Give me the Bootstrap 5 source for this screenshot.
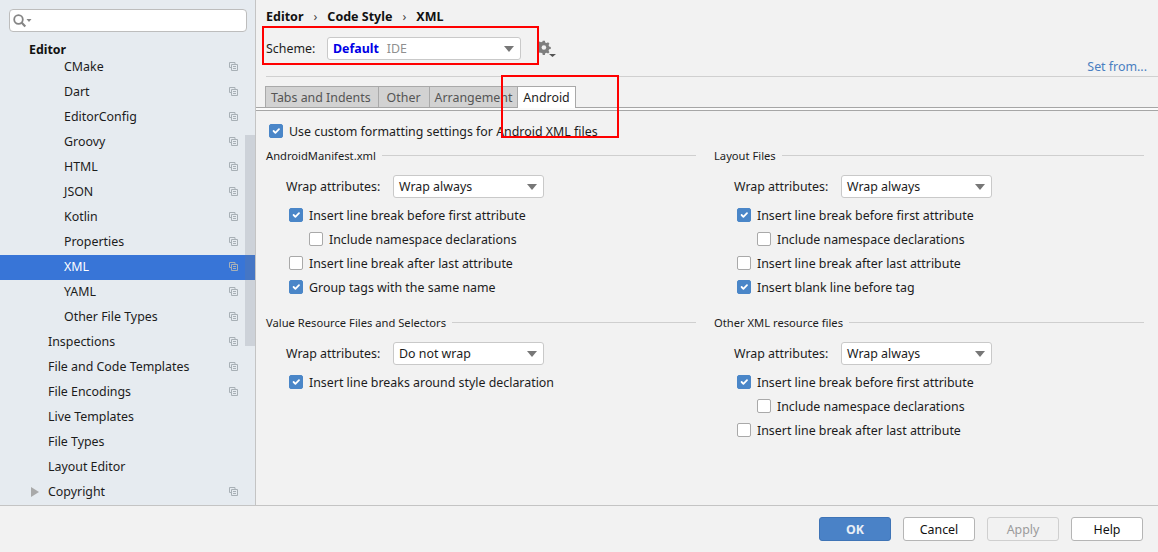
<!DOCTYPE html>
<html lang="en">
<head>
<meta charset="utf-8">
<title>Settings</title>
<link href="https://cdn.jsdelivr.net/npm/bootstrap@5.3.0/dist/css/bootstrap.min.css" rel="stylesheet">
<style>
html,body{height:552px;overflow:hidden}
body{background:#f2f2f2;font-family:"Noto Sans","Liberation Sans",sans-serif;font-size:12.4px;color:#1c1c1c;line-height:15px}
.shell{height:505px;position:relative}
.side{width:256px;flex:none;background:#e6ebf0;border-right:1px solid #c4c4c4;position:relative;overflow:hidden}
.searchbox{margin:9px 9px 0 9px;width:238px;height:23px;background:#fff;border:1px solid #bdbdbd;border-radius:4px;padding-left:3px}
.crow{height:25px;padding-right:17px}
.crow svg{width:9px;height:9px;flex:none;margin-top:-2px}
.crow.head{height:23px;padding-left:29px;padding-top:10px;font-weight:700;color:#111}
.crow.l1{padding-left:48px}
.crow.l2{padding-left:64px}
.crow.sel{background:#3875d7;color:#fff}
.crow .nm{flex:1;position:relative;top:-1px}
.thumb{position:absolute;left:245px;top:135px;width:10px;height:211px;background:rgba(120,125,135,.22)}
.tri{position:absolute;left:31px;top:487px;width:0;height:0;border-left:8px solid #a9a9a9;border-top:5px solid transparent;border-bottom:5px solid transparent}
.main{flex:1;min-width:0}
.crumbs{height:33px;padding:9px 0 0 10px;font-weight:700;font-size:12.5px;color:#111}
.crumbs .sep{font-weight:400;color:#444;margin:0 10px}
.schemerow{height:23px;margin-top:4px;padding-left:10px}
.schemerow .lb{width:61px}
.combo{background:#fff;border:1px solid #c9c9c9;border-radius:3px;height:23px;padding:0 5px;color:#1c1c1c;position:relative}
.combo::after{content:"";position:absolute;right:6px;top:8px;border-top:6px solid #777;border-left:5px solid transparent;border-right:5px solid transparent}
.schemecombo{width:194px}
.dflt{color:#0000e6;font-weight:700;margin-right:8px}
.ide{color:#8f8f8f}
.gearbtn{margin-left:16px;line-height:0}
.setrow{height:16px;padding-right:11px;text-align:right;line-height:13px}
.setfrom{color:#4a7fc1;text-decoration:none}
.setline{height:1px;background:#d0d0d0;margin-left:10px}
.tabstrip{margin-top:9px;padding-left:9px;height:21px}
.tabx{height:21px;padding:0 5px;background:#d2d2d2;border:1px solid #a9a9a9;border-right:0;border-bottom:0;color:#555;line-height:21px}
.tabx.firstt{padding-right:7px}
.tabx.wider{padding:0 8px}
.tabx.on{background:#fff;color:#1c1c1c;border-right:1px solid #a9a9a9;height:22px;position:relative;z-index:1}
.tabrule{height:4px;border-top:1px solid #a6a6a6;border-bottom:1px solid #a6a6a6;background:#fbfbfb}
.usecustom{margin:12px 0 0 13px;height:16px}
.colsgrid{display:grid;grid-template-columns:430px 430px;column-gap:18px;padding-left:10px;margin-top:7px}
.secthead{height:18px;color:#1c1c1c;font-size:11.2px}
.secthead i{flex:1;height:1px;background:#cfcfcf;margin-left:6px;margin-top:1px}
.wraprow{margin:11px 0 0 20px;height:23px}
.wraprow .lb{width:107px}
.wrapcombo{width:151px}
.chk{height:24px;margin-left:23px}
.chk.in{margin-left:43px}
.chklist{margin-top:5px}
.chk .form-check-input,.usecustom .form-check-input{width:14px;height:14px;margin:0 6px 0 0;flex:none;border:1px solid #a9a9a9;border-radius:2px;background-color:#fff}
.chk .form-check-input:checked,.usecustom .form-check-input:checked{background-color:#4a86c8;border-color:#4a86c8}
.sect2{margin-top:14px}
.bottom{height:47px;border-top:1px solid #c4c4c4;padding:11px 15px 0 0;gap:12px}
.bbtn{width:72px;height:24px;padding:0;font-size:12.4px;line-height:24px;border:1px solid #b5b5b5;border-radius:3px;background:#fff;color:#111}
.bbtn.okk{background:#4a82c7;border-color:#3f74b6;color:#e8eef6;font-weight:700}
.bbtn.off,.bbtn.off:disabled{background:#f2f2f2;border-color:#cfcfcf;color:#9b9b9b;opacity:1}
.redbox{position:absolute;border:2px solid #f00;pointer-events:none;z-index:5}
.rb1{left:262px;top:26px;width:277px;height:39px}
.rb2{left:501px;top:75px;width:118px;height:63px}
</style>
</head>
<body>
<svg width="0" height="0" class="position-absolute">
<symbol id="cp" viewBox="0 0 9 9"><path d="M2 5.500H.5V.5h5.500V2M2.500 2.500h6v6h-6zM4 4.500h3M4 6.500h3" fill="none" stroke="#a8b0b6" stroke-width="1"/></symbol>
</svg>
<div class="shell d-flex">
<aside class="side">
<div class="searchbox d-flex align-items-center">
<svg width="19" height="14" viewBox="0 0 19 14"><circle cx="5.500" cy="5.500" r="4.300" fill="none" stroke="#858585" stroke-width="1.800"/><path d="M8.500 8.500l3.800 4" stroke="#858585" stroke-width="2.200"/><path d="M13.500 5h5l-2.500 3z" fill="#858585"/></svg>
</div>
<div class="crow head d-flex align-items-start">Editor</div>
<div class="crow l2 d-flex align-items-center"><span class="nm">CMake</span><svg><use href="#cp"/></svg></div>
<div class="crow l2 d-flex align-items-center"><span class="nm">Dart</span><svg><use href="#cp"/></svg></div>
<div class="crow l2 d-flex align-items-center"><span class="nm">EditorConfig</span><svg><use href="#cp"/></svg></div>
<div class="crow l2 d-flex align-items-center"><span class="nm">Groovy</span><svg><use href="#cp"/></svg></div>
<div class="crow l2 d-flex align-items-center"><span class="nm">HTML</span><svg><use href="#cp"/></svg></div>
<div class="crow l2 d-flex align-items-center"><span class="nm">JSON</span><svg><use href="#cp"/></svg></div>
<div class="crow l2 d-flex align-items-center"><span class="nm">Kotlin</span><svg><use href="#cp"/></svg></div>
<div class="crow l2 d-flex align-items-center"><span class="nm">Properties</span><svg><use href="#cp"/></svg></div>
<div class="crow l2 sel d-flex align-items-center"><span class="nm">XML</span><svg><use href="#cp"/></svg></div>
<div class="crow l2 d-flex align-items-center"><span class="nm">YAML</span><svg><use href="#cp"/></svg></div>
<div class="crow l2 d-flex align-items-center"><span class="nm">Other File Types</span><svg><use href="#cp"/></svg></div>
<div class="crow l1 d-flex align-items-center"><span class="nm">Inspections</span><svg><use href="#cp"/></svg></div>
<div class="crow l1 d-flex align-items-center"><span class="nm">File and Code Templates</span><svg><use href="#cp"/></svg></div>
<div class="crow l1 d-flex align-items-center"><span class="nm">File Encodings</span><svg><use href="#cp"/></svg></div>
<div class="crow l1 d-flex align-items-center"><span class="nm">Live Templates</span></div>
<div class="crow l1 d-flex align-items-center"><span class="nm">File Types</span></div>
<div class="crow l1 d-flex align-items-center"><span class="nm">Layout Editor</span></div>
<div class="crow l1 d-flex align-items-center"><span class="nm">Copyright</span><svg><use href="#cp"/></svg></div>
<div class="thumb"></div>
<div class="tri"></div>
</aside>
<main class="main">
<div class="crumbs">Editor<span class="sep">›</span>Code Style<span class="sep">›</span>XML</div>
<div class="schemerow d-flex align-items-center">
<span class="lb">Scheme:</span>
<div class="combo schemecombo d-flex align-items-center"><span class="dflt">Default</span><span class="ide">IDE</span></div>
<span class="gearbtn"><svg width="20" height="18" viewBox="0 0 20 18"><path d="M7 1h2.600l.4 2 1.700.8 1.800-1.100 1.700 1.800-1.100 1.700.7 1.700 2 .5v2.500l-2 .5-.7 1.700 1.100 1.700-1.700 1.800-1.800-1.100-1.700.7-.4 2H7l-.4-2-1.700-.7L3 15.600l-1.700-1.800 1.100-1.700-.7-1.700-2-.5V7.400l2-.5.7-1.700-1.100-1.700L3 1.700 4.900 2.800l1.700-.7z" transform="scale(.82)" fill="#7e7e7e"/><circle cx="6.900" cy="7.500" r="2.300" fill="#f2f2f2"/><path d="M12 14h7l-3.500 3z" fill="#555"/></svg></span>
</div>
<div class="setrow"><a class="setfrom" href="#">Set from...</a></div>
<div class="setline"></div>
<div class="tabstrip d-flex">
<div class="tabx firstt">Tabs and Indents</div><div class="tabx wider">Other</div><div class="tabx">Arrangement</div><div class="tabx on">Android</div>
</div>
<div class="tabrule"></div>
<div class="usecustom d-flex align-items-center"><input class="form-check-input" type="checkbox" checked><span>Use custom formatting settings for Android XML files</span></div>
<div class="colsgrid">
<section>
<div class="secthead d-flex align-items-center">AndroidManifest.xml<i></i></div>
<div class="wraprow d-flex align-items-center"><span class="lb">Wrap attributes:</span><div class="combo wrapcombo d-flex align-items-center">Wrap always</div></div>
<div class="chklist">
<div class="chk d-flex align-items-center"><input class="form-check-input" type="checkbox" checked><span>Insert line break before first attribute</span></div>
<div class="chk in d-flex align-items-center"><input class="form-check-input" type="checkbox"><span>Include namespace declarations</span></div>
<div class="chk d-flex align-items-center"><input class="form-check-input" type="checkbox"><span>Insert line break after last attribute</span></div>
<div class="chk d-flex align-items-center"><input class="form-check-input" type="checkbox" checked><span>Group tags with the same name</span></div>
</div>
</section>
<section>
<div class="secthead d-flex align-items-center">Layout Files<i></i></div>
<div class="wraprow d-flex align-items-center"><span class="lb">Wrap attributes:</span><div class="combo wrapcombo d-flex align-items-center">Wrap always</div></div>
<div class="chklist">
<div class="chk d-flex align-items-center"><input class="form-check-input" type="checkbox" checked><span>Insert line break before first attribute</span></div>
<div class="chk in d-flex align-items-center"><input class="form-check-input" type="checkbox"><span>Include namespace declarations</span></div>
<div class="chk d-flex align-items-center"><input class="form-check-input" type="checkbox"><span>Insert line break after last attribute</span></div>
<div class="chk d-flex align-items-center"><input class="form-check-input" type="checkbox" checked><span>Insert blank line before tag</span></div>
</div>
</section>
<section class="sect2">
<div class="secthead d-flex align-items-center">Value Resource Files and Selectors<i></i></div>
<div class="wraprow d-flex align-items-center"><span class="lb">Wrap attributes:</span><div class="combo wrapcombo d-flex align-items-center">Do not wrap</div></div>
<div class="chklist">
<div class="chk d-flex align-items-center"><input class="form-check-input" type="checkbox" checked><span>Insert line breaks around style declaration</span></div>
</div>
</section>
<section class="sect2">
<div class="secthead d-flex align-items-center">Other XML resource files<i></i></div>
<div class="wraprow d-flex align-items-center"><span class="lb">Wrap attributes:</span><div class="combo wrapcombo d-flex align-items-center">Wrap always</div></div>
<div class="chklist">
<div class="chk d-flex align-items-center"><input class="form-check-input" type="checkbox" checked><span>Insert line break before first attribute</span></div>
<div class="chk in d-flex align-items-center"><input class="form-check-input" type="checkbox"><span>Include namespace declarations</span></div>
<div class="chk d-flex align-items-center"><input class="form-check-input" type="checkbox"><span>Insert line break after last attribute</span></div>
</div>
</section>
</div>
</main>
</div>
<footer class="bottom d-flex justify-content-end">
<button class="btn bbtn okk">OK</button>
<button class="btn bbtn">Cancel</button>
<button class="btn bbtn off" disabled>Apply</button>
<button class="btn bbtn">Help</button>
</footer>
<div class="redbox rb1"></div>
<div class="redbox rb2"></div>
<script src="https://cdn.jsdelivr.net/npm/bootstrap@5.3.0/dist/js/bootstrap.bundle.min.js"></script>
</body>
</html>
